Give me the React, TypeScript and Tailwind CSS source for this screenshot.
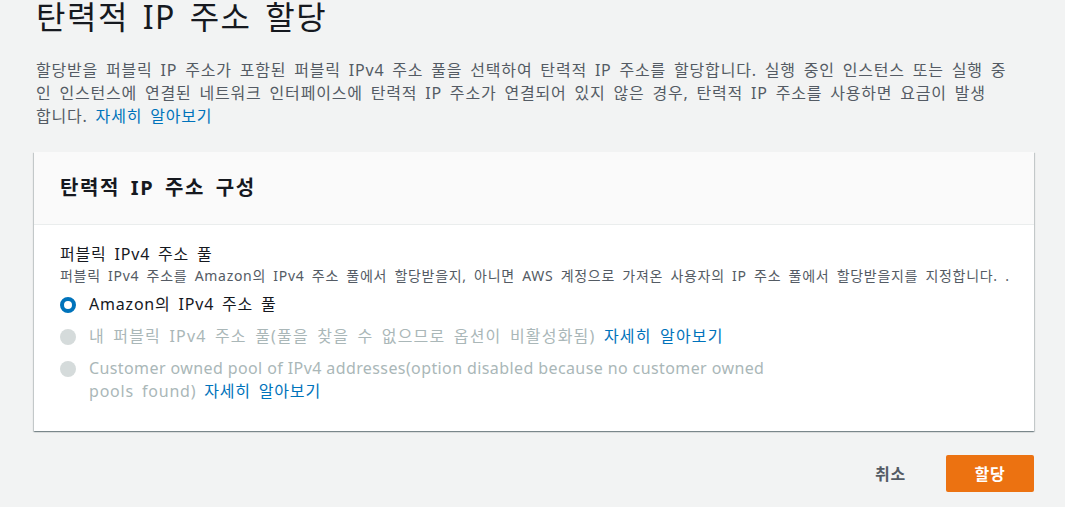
import React from 'react';

const font = { fontFamily: '"Noto Sans", "Noto Sans CJK KR", sans-serif' };

function Radio({ checked, disabled }: { checked?: boolean; disabled?: boolean }) {
  if (checked) {
    return <span className="mt-[4px] block h-4 w-4 shrink-0 rounded-full border-[4px] border-[#0073bb] bg-white" />;
  }
  return <span className={`mt-[4px] block h-4 w-4 shrink-0 rounded-full ${disabled ? 'bg-[#d5dbdb]' : 'border-2 border-[#879596] bg-white'}`} />;
}

export default function App() {
  return <div className="min-h-[507px] w-full overflow-hidden bg-[#f2f3f3] text-[#16191f] tracking-[0.8px] [word-spacing:3px]" style={font}>
      <div className="pl-[36px] pr-[20px]">
        <h1 className="mt-[-3px] h-[40px] text-[32px] leading-[40px] font-normal tracking-[1.5px] [word-spacing:4px]">탄력적 IP 주소 할당</h1>
        <p className="mt-[22px] whitespace-nowrap text-[16px] leading-[23px] text-[#545b64]">
          할당받을 퍼블릭 IP 주소가 포함된 퍼블릭 IPv4 주소 풀을 선택하여 탄력적 IP 주소를 할당합니다. 실행 중인 인스턴스 또는 실행 중<br />
          인 인스턴스에 연결된 네트워크 인터페이스에 탄력적 IP 주소가 연결되어 있지 않은 경우, 탄력적 IP 주소를 사용하면 요금이 발생<br />
          합니다. <a className="text-[#0073bb]">자세히 알아보기</a>
        </p>
      </div>

      <section className="ml-[34px] mt-[24px] w-[1000px] bg-white shadow-[0_1px_1px_0_rgba(0,28,36,0.3),1px_1px_1px_0_rgba(0,28,36,0.15),-1px_1px_1px_0_rgba(0,28,36,0.15)]">
        <div className="flex h-[73px] items-center border-b border-[#eaeded] bg-[#fafafa] px-[26px]">
          <h2 className="text-[20px] font-bold leading-[28px] tracking-[1.6px] [word-spacing:4px]">탄력적 IP 주소 구성</h2>
        </div>
        <div className="px-[26px] pt-[18px] pb-[28px]">
          <div className="text-[16px] leading-[23px]">퍼블릭 IPv4 주소 풀</div>
          <div className="whitespace-nowrap text-[14px] leading-[20px] tracking-[0.7px] text-[#545b64]">
            퍼블릭 IPv4 주소를 Amazon의 IPv4 주소 풀에서 할당받을지, 아니면 AWS 계정으로 가져온 사용자의 IP 주소 풀에서 할당받을지를 지정합니다. .
          </div>
          <div className="mt-[7px] flex flex-col gap-[9px]">
            <label className="flex gap-[13px] text-[16px] leading-[23px]">
              <Radio checked />
              <span>Amazon의 IPv4 주소 풀</span>
            </label>
            <label className="flex gap-[13px] text-[16px] leading-[23px] text-[#aab7b8]">
              <Radio disabled />
              <span className="tracking-[1.2px]">내 퍼블릭 IPv4 주소 풀(풀을 찾을 수 없으므로 옵션이 비활성화됨) <a className="text-[#0073bb]">자세히 알아보기</a></span>
            </label>
            <label className="flex gap-[13px] text-[16px] leading-[23px] text-[#aab7b8]">
              <Radio disabled />
              <span className="w-[720px]">
                <span className="tracking-[0.4px] [word-spacing:0px]">Customer owned pool of IPv4 addresses(option disabled because no customer owned</span><br />
                pools found) <a className="text-[#0073bb]">자세히 알아보기</a>
              </span>
            </label>
          </div>
        </div>
      </section>

      <div className="mt-[24px] flex w-[1034px] items-center justify-end gap-[40px]">
        <button className="text-[16px] font-bold leading-[22px] text-[#545b64]">취소</button>
        <button className="h-[37px] w-[88px] rounded-[2px] bg-[#ec7211] text-[16px] font-bold text-white">할당</button>
      </div>
    </div>;
}
